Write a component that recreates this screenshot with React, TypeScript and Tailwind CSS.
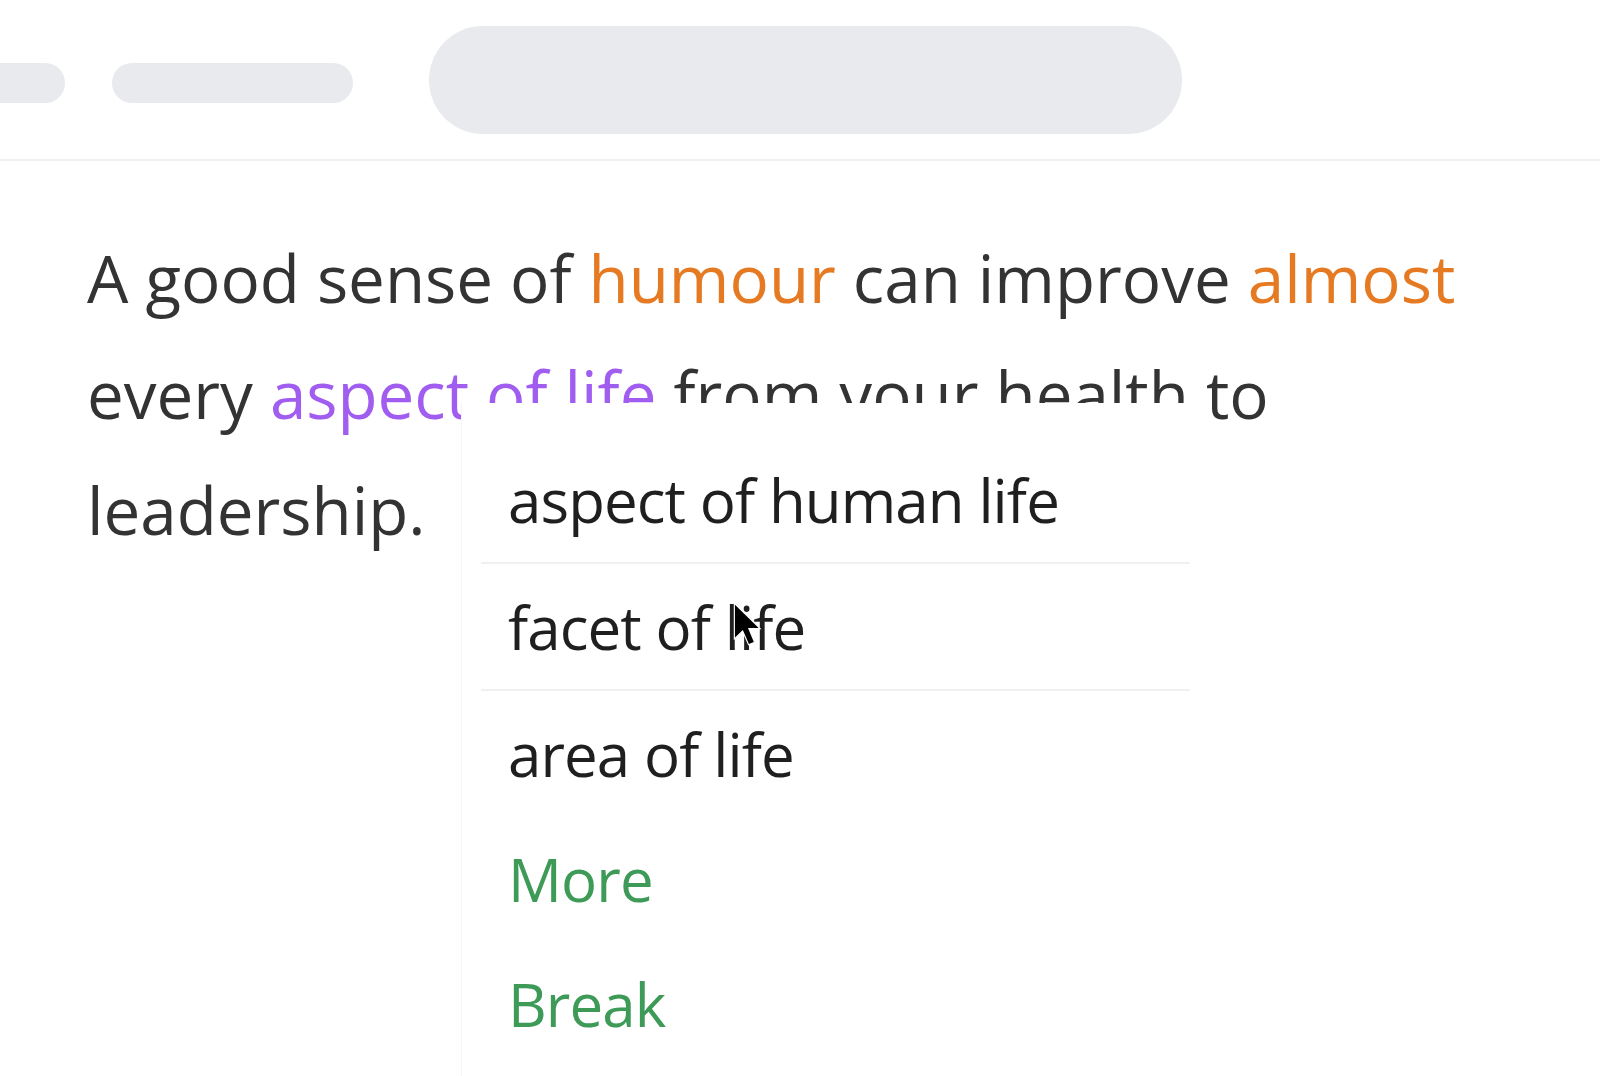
import React from "react";

const options = [
  { id: 1, label: "aspect of human life", tone: "text-[#1f1f1f]", divider: true },
  { id: 2, label: "facet of life", tone: "text-[#1f1f1f]", divider: true },
  { id: 3, label: "area of life", tone: "text-[#1f1f1f]", divider: false },
  { id: 4, label: "More", tone: "text-[#3d9a57]", divider: false },
  { id: 5, label: "Break", tone: "text-[#3d9a57]", divider: false },
];

const Cursor = () => (
  <svg
    className="absolute left-[270px] top-[198px]"
    width="30"
    height="46"
    viewBox="0 0 13 20"
  >
    <path
      d="M1 1 L1 16.5 L4.6 13 L7.2 19 L9.8 17.9 L7.3 12 L12.2 12 Z"
      fill="#000"
      stroke="#fff"
      strokeWidth="0.5"
    />
  </svg>
);

const App = () => {
  return (
    <div
      className="relative w-[1600px] h-[1076px] overflow-hidden bg-white"
      style={{ fontFamily: '"Open Sans", "Liberation Sans", sans-serif' }}
    >
      <div className="flex items-center h-[161px] border-b-2 border-[#eef0f2]">
        <div className="-ml-[30px] w-[95px] h-[40px] rounded-full bg-[#e8eaed] mt-[6px]"></div>
        <div className="ml-[47px] w-[241px] h-[40px] rounded-full bg-[#e8eaed] mt-[6px]"></div>
        <div className="ml-[76px] w-[753px] h-[108px] rounded-full bg-[#e8eaed]"></div>
      </div>

      <p className="pl-[87px] pr-[120px] pt-[59px] text-[65.5px] leading-[116px] text-[#333]">
        A good sense of <span className="text-[#e67a22]">humour</span> can improve{" "}
        <span className="text-[#e67a22]">almost</span> every{" "}
        <span className="text-[#a15df0]">aspect of life</span> from your health to leadership.
      </p>

      <div className="absolute left-[461px] top-[403px] w-[745px] h-[700px] bg-white border-l border-[#f6f6f6]">
        <div className="pt-[34px]">
          {options.map((o) => (
            <div key={o.id}>
              <div className="flex items-center h-[125px] pl-[46px]">
                <span className={`text-[60px] tracking-[-0.9px] ${o.tone}`}>{o.label}</span>
              </div>
              {o.divider && <div className="ml-[19px] w-[709px] h-[2px] bg-[#f0f0f0]"></div>}
            </div>
          ))}
        </div>
        <Cursor />
      </div>
    </div>
  );
};

export default App;
